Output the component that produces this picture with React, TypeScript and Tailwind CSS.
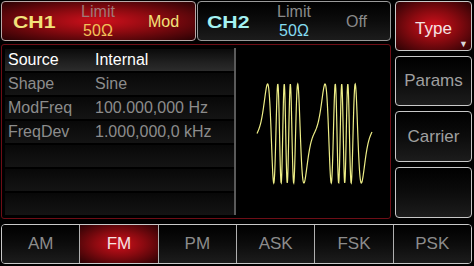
const ROWS = [
  { label: 'Source', value: 'Internal', active: true },
  { label: 'Shape', value: 'Sine' },
  { label: 'ModFreq', value: '100.000,000 Hz' },
  { label: 'FreqDev', value: '1.000,000,0 kHz' },
  { label: '', value: '' },
  { label: '', value: '' },
  { label: '', value: '' },
]

const TABS = ['AM', 'FM', 'PM', 'ASK', 'FSK', 'PSK']

const RED_GLOW = 'bg-[radial-gradient(ellipse_at_center,#d0101c_0%,#8a0a10_45%,#2a0204_100%)]'
const DARK_BTN = 'bg-[linear-gradient(to_bottom,#000_0%,#0c0c0c_50%,#1c1c1c_100%)]'

function wavePoints() {
  const pts: string[] = []
  const a = 0.087
  const b = 0.08
  const P = 57.5
  for (let u = 0; u <= 115; u += 0.25) {
    const cycles = a * u - ((b * P) / (2 * Math.PI)) * Math.sin((2 * Math.PI * u) / P)
    const y = 88.5 - 49.5 * Math.sin(2 * Math.PI * cycles)
    pts.push(`${(21 + u).toFixed(2)},${y.toFixed(2)}`)
  }
  return pts.join(' ')
}

function SideButton({ label, active, h }: { label?: string; active?: boolean; h: string }) {
  return (
    <div
      className={`relative ${h} rounded-[4px] border border-[#c8c8c8] flex items-center justify-center ${
        active ? RED_GLOW : DARK_BTN
      }`}
    >
      {label && (
        <span className={`text-[17px] ${active ? 'text-[#f4e4e4] mt-[5px]' : 'text-[#a0a0a0]'}`}>{label}</span>
      )}
      {active && (
        <span className="absolute right-[3px] bottom-[1px] text-[9px] leading-none text-[#d8d8d8]">▼</span>
      )}
    </div>
  )
}

export default function App() {
  return (
    <div
      className="w-[474px] h-[266px] bg-black flex flex-col overflow-hidden"
      style={{ fontFamily: '"Liberation Sans", Arial, sans-serif' }}
    >
      <div className="flex gap-[4px] pl-[1px] pt-[1px] h-[219px]">
        <div className="w-[390px] flex flex-col gap-[3px]">
          {/* channel bar */}
          <div className="flex gap-[1px] h-[40px]">
            <div className={`w-[195px] rounded-[4px] border border-[#b8a8a8] ${RED_GLOW} flex items-center pl-[11px]`}>
              <span className="text-[17px] font-bold text-[#f2e27a] w-[52px] scale-x-[1.25] origin-left mt-[3px]">CH1</span>
              <div className="flex flex-col items-center w-[66px] leading-none">
                <span className="text-[16px] text-[#a07878]">Limit</span>
                <span className="text-[16px] text-[#f2c25a] mt-[3px]">50Ω</span>
              </div>
              <span className="text-[16px] text-[#f2e27a] ml-[17px] mt-[2px]">Mod</span>
            </div>
            <div className={`w-[194px] rounded-[4px] border border-[#9a9a9a] ${DARK_BTN} flex items-center pl-[9px]`}>
              <span className="text-[17px] font-bold text-[#a4f2f2] w-[50px] scale-x-[1.25] origin-left mt-[3px]">CH2</span>
              <div className="flex flex-col items-center w-[74px] leading-none">
                <span className="text-[16px] text-[#8a8a8a]">Limit</span>
                <span className="text-[16px] text-[#84dcf0] mt-[3px]">50Ω</span>
              </div>
              <span className="text-[16px] text-[#8a8a8a] ml-[15px] mt-[2px]">Off</span>
            </div>
          </div>
          {/* main panel */}
          <div className="flex-1 rounded-[3px] border border-[#6e0e16] flex">
            <div className="w-[232px] flex flex-col pt-[4px] pl-[3px]">
              {ROWS.map((r, i) => (
                <div
                  key={i}
                  className={`h-[24px] shrink-0 flex items-center border-b-2 border-black ${
                    r.active
                      ? 'bg-[linear-gradient(to_bottom,#0a0a0a_0%,#202020_60%,#2c2c2c_100%)]'
                      : 'bg-[linear-gradient(to_bottom,#080808_0%,#141414_100%)]'
                  }`}
                >
                  <span className={`w-[90px] pl-[3px] text-[16px] ${r.active ? 'text-white' : 'text-[#8c8c8c]'}`}>
                    {r.label}
                  </span>
                  <span className={`text-[16px] ${r.active ? 'text-white' : 'text-[#8c8c8c]'}`}>{r.value}</span>
                </div>
              ))}
            </div>
            <div className="w-[2px] bg-[#5a5a5a] my-[3px]" />
            <svg width="154" height="172" viewBox="0 0 154 172">
              <polyline points={wavePoints()} fill="none" stroke="#eded86" strokeWidth="1.2" />
            </svg>
          </div>
        </div>
        <div className="w-[77px] flex flex-col gap-[5px]">
          <SideButton label="Type" active h="h-[50px]" />
          <SideButton label="Params" h="h-[50px]" />
          <SideButton label="Carrier" h="h-[51px]" />
          <SideButton h="h-[51px]" />
        </div>
      </div>
      {/* mode tabs */}
      <div className="mt-[5px] ml-[1px] w-[471px] h-[40px] rounded-[4px] border border-[#c8c8c8] flex overflow-hidden">
        {TABS.map((t, i) => (
          <div
            key={t}
            className={`flex-1 flex items-center justify-center text-[17px] ${
              i > 0 ? 'border-l border-[#b0b0b0]' : ''
            } ${t === 'FM' ? `${RED_GLOW} text-[#f6e2e2]` : `${DARK_BTN} text-[#8c8c8c]`}`}
          >
            {t}
          </div>
        ))}
      </div>
    </div>
  )
}
